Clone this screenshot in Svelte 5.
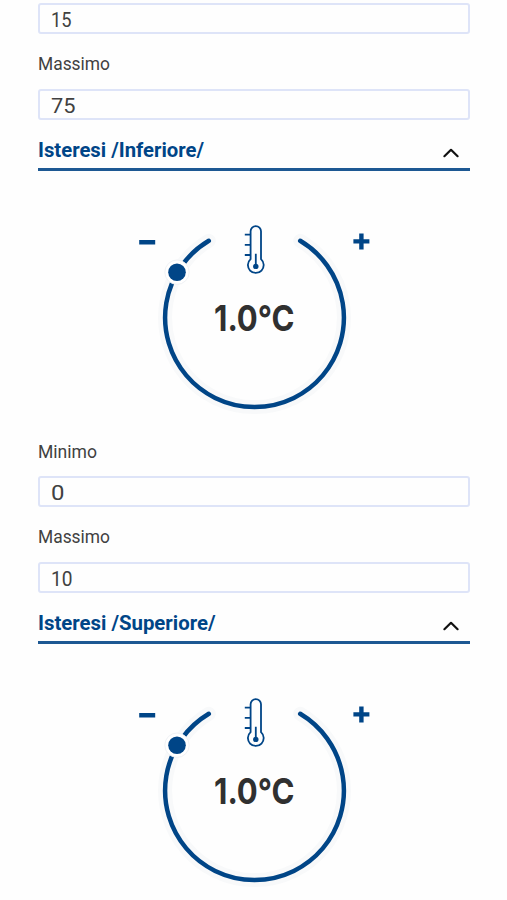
<script lang="ts">
	const first = [
		{ label: '', value: '15' },
		{ label: 'Massimo', value: '75' }
	];

	const sections = [
		{
			title: 'Isteresi /Inferiore/',
			width: 166,
			temperature: '1.0°C',
			fields: [
				{ label: 'Minimo', value: '0' },
				{ label: 'Massimo', value: '10' }
			]
		},
		{ title: 'Isteresi /Superiore/', width: 177.5, temperature: '1.0°C', fields: [] }
	];

	// condensed widths of the labels and values
	const widths: Record<string, number> = { Minimo: 59, Massimo: 72, '15': 20.5, '75': 24.5, '0': 13.5, '10': 21.5 };
</script>

{#snippet field(label: string, value: string)}
	<div class="field">
		{#if label}
			<svg class="label" width="100" height="54.5">
				<text x="0" y="35.5" textLength={widths[label]} lengthAdjust="spacingAndGlyphs">{label}</text>
			</svg>
		{/if}
		<div class="input">
			<svg width="60" height="27">
				<text x="0" y="22" textLength={widths[value]} lengthAdjust="spacingAndGlyphs">{value}</text>
			</svg>
		</div>
	</div>
{/snippet}

<main>
	{#each first as item}
		{@render field(item.label, item.value)}
	{/each}

	{#each sections as section}
		<section>
			<header>
				<svg width="220" height="48">
					<text x="0" y="36.9" textLength={section.width} lengthAdjust="spacingAndGlyphs">{section.title}</text>
				</svg>
				<svg class="chevron" width="16" height="10" viewBox="0 0 16 10">
					<path d="M1.4 8.2 8 1.8l6.6 6.4" />
				</svg>
			</header>

			<svg class="dial" width="240" height="215" viewBox="0 0 240 215">
				<!-- track -->
				<path class="halo" d="M76.8 39.8A89.4 89.4 0 1 0 168.2 39.8" />
				<path class="arc" d="M76.8 39.8A89.4 89.4 0 1 0 168.2 39.8" />
				<circle class="ring" cx="45" cy="71.2" r="12.2" />
				<circle class="knob" cx="45" cy="71.2" r="8.8" />
				<!-- minus / plus -->
				<path class="sign" d="M7.2 41.3h16M221.4 40.4h16M229.4 32.4v16" />
				<!-- thermometer -->
				<g class="thermo">
					<path d="M118.6 58.1V30.3a5.2 5.2 0 0 1 10.4 0v27.8a7.9 7.9 0 1 1-10.4 0z" />
					<path d="M112.8 33.6h5.6M112.8 43.8h5.6M112.8 54h5.6M123.8 52.8v12" />
					<circle cx="123.8" cy="65.4" r="2.7" />
				</g>
				<text x="82" y="129.7" textLength="80.5" lengthAdjust="spacingAndGlyphs">{section.temperature}</text>
			</svg>

			{#each section.fields as item}
				{@render field(item.label, item.value)}
			{/each}
		</section>
	{/each}
</main>

<style>
	:global(body) {
		margin: 0;
		background: #fefefe;
		overflow: hidden;
	}

	main {
		box-sizing: border-box;
		width: 507px;
		height: 900px;
		overflow: hidden;
		padding: 3px 37px 0 37.5px;
		font-family: Roboto, 'Liberation Sans', sans-serif;
		color: #414141;
	}

	svg {
		display: block;
		overflow: visible;
	}

	text {
		fill: #414141;
	}

	.label text {
		font-size: 19px;
	}

	.input {
		box-sizing: border-box;
		height: 31px;
		padding-left: 11.5px;
		border: 2px solid #dee4f8;
		border-radius: 3px;
	}

	.input text {
		font-size: 21px;
	}

	header {
		display: flex;
		justify-content: space-between;
		height: 48.5px;
		border-bottom: 3px solid #1d5893;
	}

	header text {
		font-size: 20.5px;
		font-weight: 700;
		fill: #004587;
	}

	.chevron {
		margin: 28.7px 11.5px 0 0;
		fill: none;
		stroke: #111;
		stroke-width: 2.2;
		stroke-linecap: round;
		stroke-linejoin: round;
	}

	.dial {
		margin: 29.5px auto 6px 94px;
	}

	.dial path {
		fill: none;
		stroke: #004587;
	}

	.dial .halo {
		stroke: #f8f9fa;
		stroke-width: 14;
		stroke-linecap: round;
	}

	.dial .arc {
		stroke-width: 4.5;
		stroke-linecap: round;
	}

	.ring {
		fill: #fff;
		stroke: #f0f2f5;
		stroke-width: 1;
	}

	.knob {
		fill: #004587;
	}

	.dial .sign {
		stroke-width: 4.4;
	}

	.thermo path {
		stroke-width: 1.8;
	}

	.thermo circle {
		fill: #004587;
	}

	.dial text {
		font-family: Inter, Roboto, sans-serif;
		font-size: 35.5px;
		font-weight: 700;
		fill: #303030;
	}
</style>
